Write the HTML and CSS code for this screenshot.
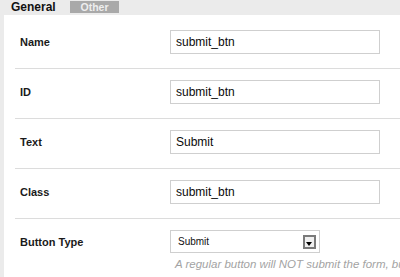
FILE: index.html
```html
<!DOCTYPE html>
<html lang="en">

<head>
    <meta charset="UTF-8">
    <title>Button Properties</title>
    <link rel="stylesheet" href="styles.css">
</head>

<body>
    <div class="tabs">
        <div class="tab active">General</div>
        <div class="tab">Other</div>
    </div>

    <div class="panel">
        <div class="prop-row">
            <div class="prop-label">Name</div>
            <div class="prop-field">
                <input type="text" class="text-input" value="submit_btn">
            </div>
        </div>
        <div class="prop-row">
            <div class="prop-label">ID</div>
            <div class="prop-field">
                <input type="text" class="text-input" value="submit_btn">
            </div>
        </div>
        <div class="prop-row">
            <div class="prop-label">Text</div>
            <div class="prop-field">
                <input type="text" class="text-input" value="Submit">
            </div>
        </div>
        <div class="prop-row">
            <div class="prop-label">Class</div>
            <div class="prop-field">
                <input type="text" class="text-input" value="submit_btn">
            </div>
        </div>
        <div class="prop-row last">
            <div class="prop-label">Button Type</div>
            <div class="prop-field">
                <div class="dropdown">
                    <span class="dropdown-value">Submit</span>
                    <span class="dropdown-btn"></span>
                </div>
            </div>
        </div>
        <div class="hint">A regular button will NOT submit the form, but can be used with custom scripts.</div>
    </div>
</body>

</html>
```

FILE: styles.css
```css
body {
    margin: 0;
    background-color: #ebebeb;
    font-family: "Liberation Sans", Arial, sans-serif;
    overflow: hidden;
}

.tabs {
    display: flex;
    height: 15px;
}

.tab {
    width: 49px;
    height: 12px;
    margin-top: 1px;
    margin-left: 5px;
    background-color: #a9a9a9;
    color: #eeeeee;
    font-size: 10.5px;
    font-weight: bold;
    line-height: 12px;
    text-align: center;
}

.tab.active {
    width: 65px;
    height: 15px;
    margin: 0;
    background-color: #ebebeb;
    color: #111;
    font-size: 12px;
    line-height: 14px;
    text-align: left;
    padding-left: 11px;
    box-sizing: border-box;
}

.panel {
    margin-left: 4px;
    padding-top: 4px;
    background-color: white;
    height: 258px;
    overflow: hidden;
}

.prop-row {
    display: flex;
    align-items: center;
    margin-left: 11px;
    padding: 11px 0 14px;
    border-bottom: 1px solid #dcdcdc;
}

.prop-row.last {
    border-bottom: none;
    padding-bottom: 0;
}

.prop-label {
    width: 150px;
    padding-left: 5px;
    font-size: 11px;
    font-weight: bold;
    color: #1a1a1a;
}

.text-input {
    width: 210px;
    height: 24px;
    box-sizing: border-box;
    margin: 0;
    padding: 0 5px;
    border: 1px solid #cfcfcf;
    outline: none;
    font-family: "Liberation Sans", Arial, sans-serif;
    font-size: 12px;
    color: #0a0a0a;
}

.dropdown {
    display: flex;
    align-items: center;
    justify-content: space-between;
    width: 150px;
    height: 23px;
    box-sizing: border-box;
    border: 1px solid #cfcfcf;
    padding: 0 3px 0 7px;
}

.dropdown-value {
    font-size: 10px;
    color: #111;
}

.dropdown-btn {
    position: relative;
    width: 13px;
    height: 14px;
    box-sizing: border-box;
    border: 2px solid #7a7a7a;
    background-color: #f0f0f0;
}

.dropdown-btn::after {
    content: "";
    position: absolute;
    left: 1px;
    bottom: 1px;
    border-left: 3.5px solid transparent;
    border-right: 3.5px solid transparent;
    border-top: 4px solid #000;
}

.hint {
    margin: 5px 0 0 171px;
    font-size: 11.5px;
    font-style: italic;
    color: #a3a3a3;
    white-space: nowrap;
}
```
